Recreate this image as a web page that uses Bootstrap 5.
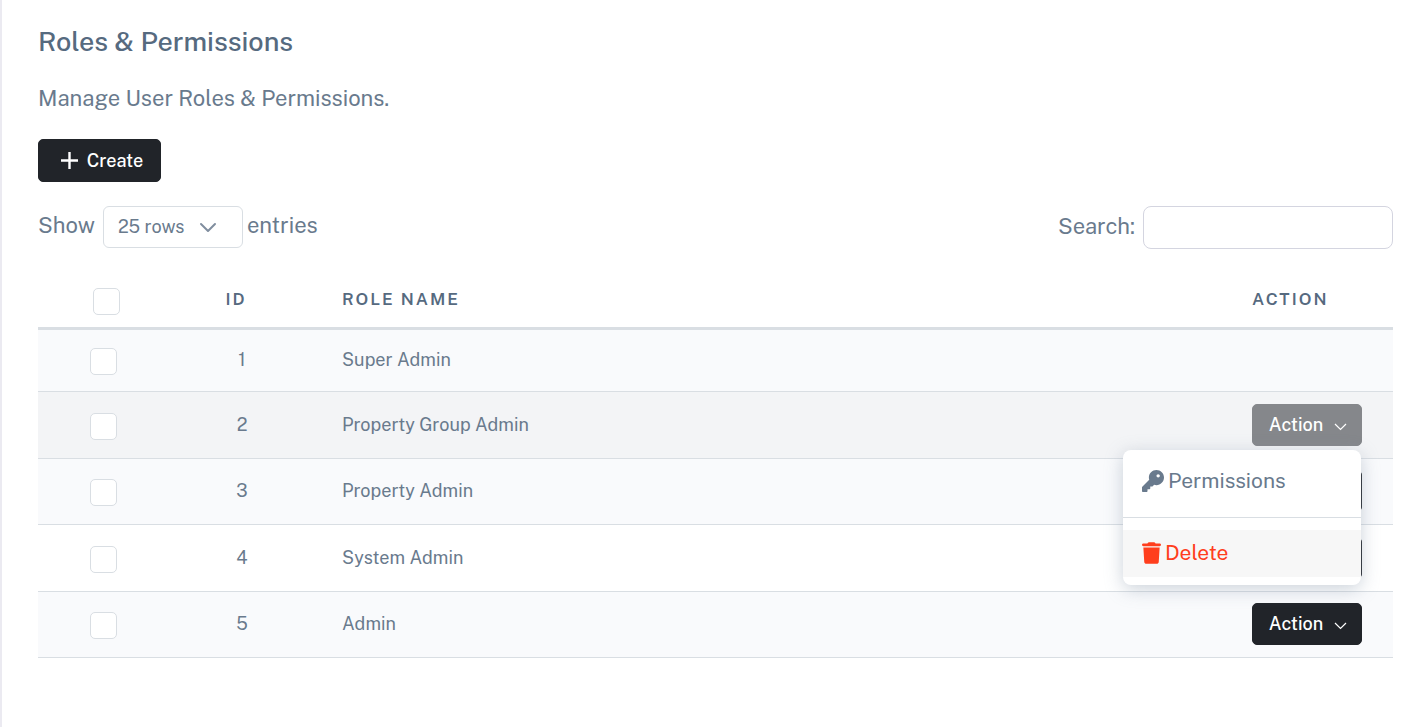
<!DOCTYPE html>
<html lang="en">
<head>
<meta charset="utf-8">
<meta name="viewport" content="width=device-width, initial-scale=1">
<title>Roles &amp; Permissions</title>
<link href="https://cdn.jsdelivr.net/npm/bootstrap@5.3.0/dist/css/bootstrap.min.css" rel="stylesheet">
<style>
  :root { --ink: #566a7f; --soft: #697a8d; --line: #d9dee3; }
  body { font-family: "Public Sans", Inter, "Liberation Sans", sans-serif; font-size: 22px; line-height: 32px; color: var(--soft); }
  .page-body { border-left: 2px solid #ebeaf1; padding: 24px 27px 24px 36px; }
  .page-title { font-size: 27px; line-height: 34px; font-weight: 500; color: var(--ink); margin-bottom: 24px; }
  .page-intro { margin-bottom: 25px; }
  .btn-dark { --bs-btn-bg: #212429; --bs-btn-border-color: #212429; --bs-btn-border-radius: 5px; --bs-btn-font-size: 18px; --bs-btn-font-weight: 500; --bs-btn-line-height: 24px; height: 42px; }
  .btn-create { width: 123px; height: 43px; }
  .toolbar { margin-top: 24px; }
  .rows-select { width: 140px; height: 42px; font-size: 18px; line-height: 24px; color: var(--soft); border-color: var(--line); border-radius: 6px; padding: 0 14px;
    background-position: right 25px center; background-size: 18px 18px;
    background-image: url("data:image/svg+xml,%3Csvg xmlns='http://www.w3.org/2000/svg' viewBox='0 0 18 18' fill='none' stroke='%23808e9f' stroke-width='2' stroke-linecap='round' stroke-linejoin='round'%3E%3Cpath d='M2 6l7 7 7-7'/%3E%3C/svg%3E"); }
  .search-box { width: 250px; height: 43px; border-color: #d4d5e0; border-radius: 8px; }
  .roles { --bs-table-color: var(--soft); --bs-table-striped-color: var(--soft); --bs-table-striped-bg: #f9fafc; --bs-table-active-color: var(--soft); --bs-table-active-bg: #f3f4f6; border-color: var(--line); font-size: 18px; line-height: 24px; table-layout: fixed; margin: 23px 0 0; color: var(--soft); }
  .roles > thead { vertical-align: middle; }
  .roles > thead th { height: 56px; padding: 0 26px; font-size: 17px; font-weight: 600; letter-spacing: 2px; color: var(--ink); border-bottom: 3px solid var(--line); }
  .roles > thead .sortable { padding-right: 38px; }
  .roles > tbody td { height: 66px; padding: 0 26px; }
  .roles > tbody tr:nth-child(even) td { height: 67px; }
  .roles > tbody tr:first-child td { height: 63px; }
  .roles .pick { padding: 4px 0 0; text-align: center; }
  .roles > thead .pick { padding-left: 6px; }
  .roles > tbody .pick { padding-top: 3px; }
  .col-pick { width: 130px; } .col-id { width: 148px; } .col-act { width: 167px; }
  .form-check-input { width: 27px; height: 27px; margin: 0; border-color: var(--line); vertical-align: middle; }
  .form-check-input[type=checkbox] { border-radius: 5px; }
  .btn-act { width: 110px; padding: 0 0 0 4px; }
  .btn-act.show { background: #85878b !important; border-color: #85878b !important; color: #fff; }
  .dropdown-menu { top: 100%; right: 1px; width: 238px; margin-top: 4px; padding: 8px 0; border: 0; border-radius: 8px; font-size: 21px; box-shadow: 0 4px 18px rgba(140,155,172,.45); --bs-dropdown-link-color: var(--soft); }
  .dropdown-item { height: 47px; padding: 0 19px; line-height: 32px; }
  .dropdown-divider { margin: 12px 0; border-color: var(--line); opacity: 1; }
  .item-delete, .item-delete:hover { color: #ff3e1d; background: #f7f7f7; }
</style>
</head>
<body>
<main class="page-body min-vh-100">
  <h1 class="page-title">Roles &amp; Permissions</h1>
  <p class="page-intro">Manage User Roles &amp; Permissions.</p>
  <button type="button" class="btn btn-dark btn-create d-flex align-items-center justify-content-center gap-2 p-0 ps-1">
    <svg width="19" height="19" viewBox="0 0 19 19" fill="none" stroke="currentColor" stroke-width="2.4" aria-hidden="true"><path d="M9.500 1v17M1 9.500h17"/></svg>Create
  </button>

  <div class="toolbar d-flex justify-content-between align-items-start flex-wrap">
    <div class="d-flex align-items-center">
      <label for="rows" class="me-2 pb-1">Show</label>
      <select id="rows" class="form-select rows-select"><option>25 rows</option><option>50 rows</option></select>
      <label for="rows" class="ms-1 pb-1">entries</label>
    </div>
    <div class="d-flex align-items-center">
      <label for="search" class="me-2 pb-1">Search:</label>
      <input type="search" id="search" class="form-control search-box">
    </div>
  </div>

  <table class="table table-striped roles align-middle">
    <colgroup><col class="col-pick"><col class="col-id"><col><col class="col-act"></colgroup>
    <thead>
      <tr>
        <th class="pick"><input class="form-check-input" type="checkbox" aria-label="Select all roles"></th>
        <th class="text-center sortable">ID</th>
        <th>ROLE NAME</th>
        <th>ACTION</th>
      </tr>
    </thead>
    <tbody>
      <tr>
        <td class="pick"><input class="form-check-input" type="checkbox" aria-label="Select Super Admin"></td>
        <td class="text-center">1</td><td>Super Admin</td><td></td>
      </tr>
      <tr class="table-active">
        <td class="pick"><input class="form-check-input" type="checkbox" aria-label="Select Property Group Admin"></td>
        <td class="text-center">2</td><td>Property Group Admin</td>
        <td>
          <div class="dropdown d-inline-block align-middle">
            <button type="button" class="btn btn-dark btn-act show d-flex align-items-center justify-content-center" aria-expanded="true">Action<svg class="ms-2" width="18" height="14" viewBox="0 0 18 14" fill="none" stroke="currentColor" stroke-width="1.200" aria-hidden="true"><path d="M4 6l5.500 5.500L15 6"/></svg></button>
            <ul class="dropdown-menu show">
              <li><a class="dropdown-item d-flex align-items-center" href="#"><svg class="me-1" width="22" height="22" viewBox="0 0 512 512" fill="currentColor" aria-hidden="true"><path d="M336 352c97.200 0 176-78.800 176-176S433.200 0 336 0 160 78.800 160 176c0 18.700 2.900 36.800 8.300 53.700L7 391c-4.500 4.500-7 10.600-7 17v80c0 13.300 10.700 24 24 24h80c13.300 0 24-10.700 24-24v-40h40c13.300 0 24-10.700 24-24v-40h40c6.400 0 12.500-2.500 17-7l33.300-33.300c16.900 5.400 35 8.300 53.700 8.300zM376 96a40 40 0 1 1 0 80 40 40 0 1 1 0-80z"/></svg>Permissions</a></li>
              <li><hr class="dropdown-divider"></li>
              <li><a class="dropdown-item item-delete d-flex align-items-center" href="#"><svg class="me-1" width="19" height="22" viewBox="0 0 448 512" fill="currentColor" aria-hidden="true"><path d="M135.200 17.700C140.600 6.800 151.700 0 163.800 0h120.400c12.100 0 23.200 6.800 28.600 17.700L320 32h96c17.700 0 32 14.300 32 32s-14.300 32-32 32H32C14.300 96 0 81.700 0 64s14.300-32 32-32h96l7.200-14.300zM32 128h384l-21.200 339c-1.600 25.300-22.600 45-47.900 45H101.100c-25.300 0-46.300-19.700-47.900-45L32 128z"/></svg>Delete</a></li>
            </ul>
          </div>
        </td>
      </tr>
      <tr>
        <td class="pick"><input class="form-check-input" type="checkbox" aria-label="Select Property Admin"></td>
        <td class="text-center">3</td><td>Property Admin</td>
        <td><button type="button" class="btn btn-dark btn-act d-flex align-items-center justify-content-center" aria-label="Action"></button></td>
      </tr>
      <tr>
        <td class="pick"><input class="form-check-input" type="checkbox" aria-label="Select System Admin"></td>
        <td class="text-center">4</td><td>System Admin</td>
        <td><button type="button" class="btn btn-dark btn-act d-flex align-items-center justify-content-center" aria-label="Action"></button></td>
      </tr>
      <tr>
        <td class="pick"><input class="form-check-input" type="checkbox" aria-label="Select Admin"></td>
        <td class="text-center">5</td><td>Admin</td>
        <td><button type="button" class="btn btn-dark btn-act d-flex align-items-center justify-content-center">Action<svg class="ms-2" width="18" height="14" viewBox="0 0 18 14" fill="none" stroke="currentColor" stroke-width="1.200" aria-hidden="true"><path d="M4 6l5.500 5.500L15 6"/></svg></button></td>
      </tr>
    </tbody>
  </table>
</main>
<script src="https://cdn.jsdelivr.net/npm/bootstrap@5.3.0/dist/js/bootstrap.bundle.min.js"></script>
</body>
</html>
